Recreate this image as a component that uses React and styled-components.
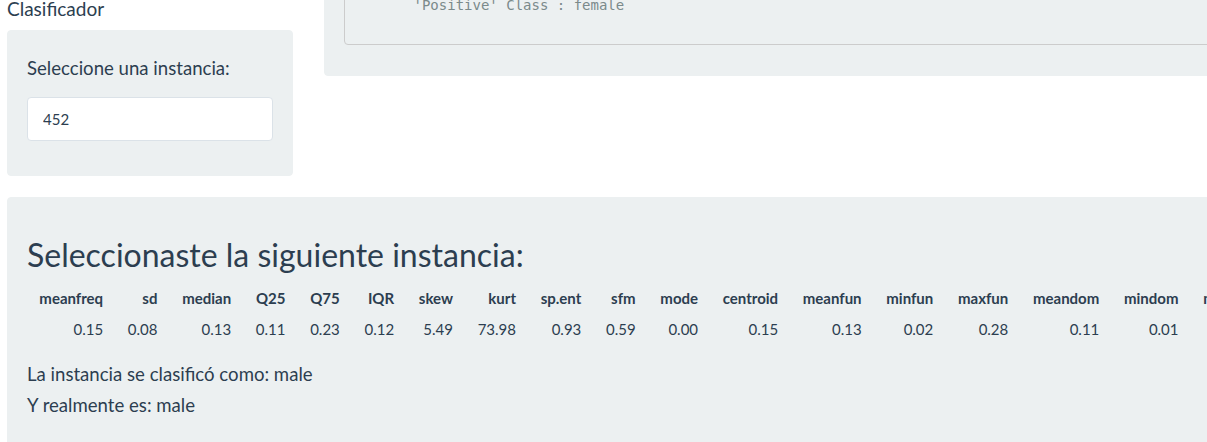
import React from "react";
import styled, { createGlobalStyle } from "styled-components";

const Global = createGlobalStyle`
  html, body { margin: 0; padding: 0; background: #ffffff; overflow: hidden; }
  body {
    font-family: Lato, "Noto Sans", "Helvetica Neue", Arial, sans-serif;
    color: #2c3e50;
    font-size: 15px;
    line-height: 1.42857;
  }
  * { box-sizing: border-box; }
`;

const Page = styled.div`
  width: 1600px;
  padding-left: 7px;
  display: flex;
  flex-direction: column;
`;

const TopRow = styled.div`
  display: flex;
  align-items: flex-start;
  gap: 31px;
`;

const Sidebar = styled.div`
  flex: none;
  width: 286px;
  display: flex;
  flex-direction: column;
`;

const Title = styled.h4`
  margin: -2px 0 11px;
  font-size: 19px;
  line-height: 21px;
  font-weight: 400;
`;

const Well = styled.div`
  background: #ecf0f1;
  border: 1px solid #ecf0f1;
  border-radius: 4px;
  padding: 19px;
  margin-bottom: ${(p) => p.$mb ?? 20}px;
`;

const Main = styled.div`
  flex: 1;
  margin-top: -96px;
`;

const Pre = styled.pre`
  margin: 0 0 11px;
  padding: 9.5px;
  background: #ecf0f1;
  border: 1px solid #cccccc;
  border-radius: 4px;
  color: #7b8a8b;
  font-family: "DejaVu Sans Mono", "Liberation Mono", monospace;
  font-size: 14px;
  line-height: 20px;
  white-space: pre;
  overflow: hidden;
`;

const FormGroup = styled.div`
  display: flex;
  flex-direction: column;
  margin-bottom: 15px;
`;

const Label = styled.label`
  font-size: 18.6px;
  line-height: 27px;
  margin: 5px 0 15px;
`;

const Input = styled.input`
  width: 100%;
  height: 44px;
  padding: 0 15px;
  border: 1px solid #dbe2e8;
  border-radius: 4px;
  background: #ffffff;
  color: #2c3e50;
  font-family: Lato, "Noto Sans", sans-serif;
  font-size: 15px;
  outline: none;
`;

const Heading = styled.h2`
  margin: 20px 0 10.5px;
  font-size: 32px;
  line-height: 1.1;
  font-weight: 400;
`;

const Table = styled.table`
  border-collapse: collapse;
  margin-bottom: 18px;
`;

const Th = styled.th`
  padding: 5px 12.35px;
  text-align: right;
  font-weight: 700;
  white-space: nowrap;
`;

const Td = styled.td`
  padding: 5px 12.35px;
  text-align: right;
  white-space: nowrap;
`;

const Line = styled.div`
  font-size: 18.6px;
  line-height: 21px;
  margin-bottom: 10px;
`;

const columns = [
  ["meanfreq", "0.15"],
  ["sd", "0.08"],
  ["median", "0.13"],
  ["Q25", "0.11"],
  ["Q75", "0.23"],
  ["IQR", "0.12"],
  ["skew", "5.49"],
  ["kurt", "73.98"],
  ["sp.ent", "0.93"],
  ["sfm", "0.59"],
  ["mode", "0.00"],
  ["centroid", "0.15"],
  ["meanfun", "0.13"],
  ["minfun", "0.02"],
  ["maxfun", "0.28"],
  ["meandom", "0.11"],
  ["mindom", "0.01"],
  ["maxdom", "2.55"],
  ["dfrange", "2.54"],
  ["modindx", "0.13"],
];

const preText = [
  "    Detection Prevalence : 0.4984          ",
  "       Balanced Accuracy : 0.9747          ",
  "                                           ",
  "       'Positive' Class : female          ",
  "                                           ",
];

export default function App() {
  return (
    <>
      <Global />
      <Page>
        <TopRow>
          <Sidebar>
            <Title>Clasificador</Title>
            <Well $mb={21}>
              <FormGroup>
                <Label htmlFor="inst">Seleccione una instancia:</Label>
                <Input id="inst" type="number" defaultValue="452" readOnly />
              </FormGroup>
            </Well>
          </Sidebar>
          <Main>
            <Well>
              <Pre>{preText.join("\n")}</Pre>
            </Well>
          </Main>
        </TopRow>
        <Well>
          <Heading>Seleccionaste la siguiente instancia:</Heading>
          <Table>
            <thead>
              <tr>
                {columns.map(([h]) => (
                  <Th key={h}>{h}</Th>
                ))}
              </tr>
            </thead>
            <tbody>
              <tr>
                {columns.map(([h, v]) => (
                  <Td key={h}>{v}</Td>
                ))}
              </tr>
            </tbody>
          </Table>
          <Line>La instancia se clasificó como: male</Line>
          <Line>Y realmente es: male</Line>
        </Well>
      </Page>
    </>
  );
}
